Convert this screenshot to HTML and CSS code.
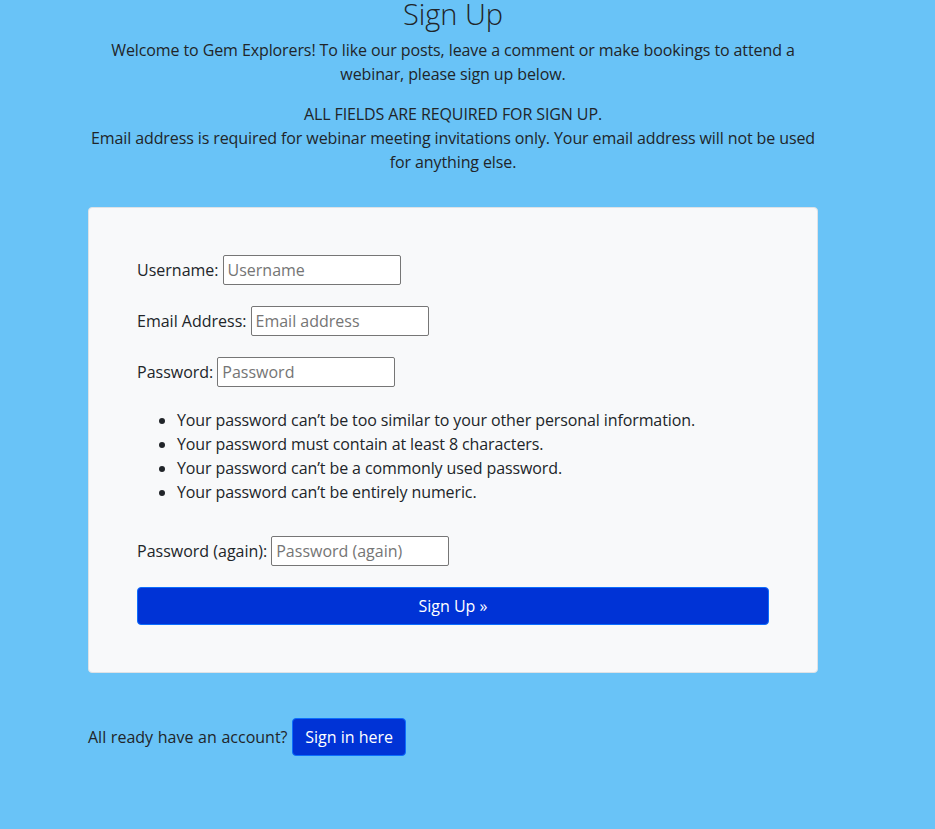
FILE: index.html
```html
<!DOCTYPE html>
<html lang="en">
<head>
<meta charset="utf-8">
<title>Sign Up</title>
<link rel="stylesheet" href="styles.css">
</head>
<body>
<main class="page">
  <h1 class="title">Sign Up</h1>
  <p class="intro">Welcome to Gem Explorers! To like our posts, leave a comment or make bookings to attend a webinar, please sign up below.</p>
  <p class="intro notice">ALL FIELDS ARE REQUIRED FOR SIGN UP.<br>Email address is required for webinar meeting invitations only. Your email address will not be used for anything else.</p>

  <form class="card">
    <p class="field"><label for="u">Username:</label> <input id="u" type="text" placeholder="Username"></p>
    <p class="field"><label for="e">Email Address:</label> <input id="e" type="email" placeholder="Email address"></p>
    <p class="field"><label for="p1">Password:</label> <input id="p1" type="password" placeholder="Password"></p>
    <ul class="rules">
      <li>Your password can’t be too similar to your other personal information.</li>
      <li>Your password must contain at least 8 characters.</li>
      <li>Your password can’t be a commonly used password.</li>
      <li>Your password can’t be entirely numeric.</li>
    </ul>
    <p class="field"><label for="p2">Password (again):</label> <input id="p2" type="password" placeholder="Password (again)"></p>
    <button class="btn btn-block" type="button">Sign Up »</button>
  </form>

  <p class="signin">All ready have an account? <a class="btn" href="#">Sign in here</a></p>
</main>
</body>
</html>
```
FILE: styles.css
```css
* { box-sizing: border-box; }

body {
  margin: 0;
  background: #69c3f7;
  color: #212529;
  font-family: "Open Sans", "Liberation Sans", sans-serif;
  font-size: 16px;
  line-height: 24px;
  letter-spacing: -0.1px;
}

.page {
  width: 730px;
  margin-left: 88px;
}

.title {
  margin: 0;
  text-align: center;
  font-size: 29px;
  font-weight: 300;
  line-height: 27px;
  letter-spacing: 0;
}

.intro {
  margin: 11px 0 0;
  text-align: center;
}

.notice {
  margin: 16px -6px 0;
}

.card {
  margin-top: 33px;
  background: #f8f9fa;
  border: 1px solid #dee2e6;
  border-radius: 4px;
  padding: 47px 48px;
}

.field {
  margin: 0 0 21px;
  display: flex;
  align-items: center;
  gap: 4px;
}

.field label { white-space: nowrap; letter-spacing: 0; }

.field input {
  width: 178px;
  height: 30px;
  border: 1px solid #767676;
  border-radius: 2px;
  background: #fff;
  padding: 0 4px;
  font: inherit;
  color: #212529;
}

.field input::placeholder { color: #757575; }

.rules {
  margin: 0 0 32px;
  padding-left: 40px;
}

.btn {
  display: inline-block;
  background: #0033d6;
  color: #fff;
  border: 1px solid #0d6efd;
  border-radius: 4px;
  padding: 6px 12px;
  font: inherit;
  line-height: 24px;
  text-decoration: none;
  cursor: pointer;
}

.btn-block {
  display: block;
  width: 100%;
}

.signin {
  margin: 45px 0 0;
  letter-spacing: 0;
  word-spacing: 0.5px;
}

.signin .btn {
  word-spacing: 0;
}
```
